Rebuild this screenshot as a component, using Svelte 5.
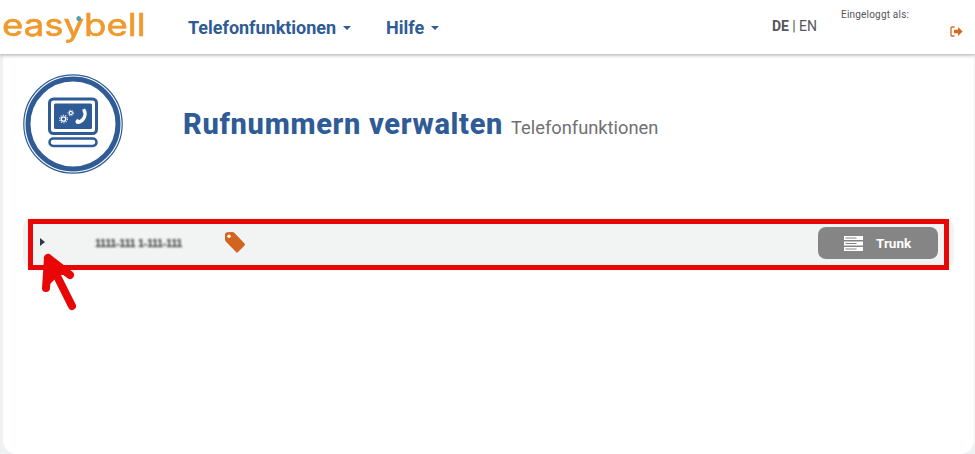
<script>
  const nav = ['Telefonfunktionen', 'Hilfe'];
</script>

<div class="page">
  <header class="topbar">
    <div class="logo-box">
      <div class="logo">eas<span class="y">y<i class="dot"></i></span>bell</div>
    </div>
    <nav class="nav">
      {#each nav as item}
        <span class="nav-item">{item}<i class="caret"></i></span>
      {/each}
    </nav>
    <div class="lang"><b>DE</b> | EN</div>
    <div class="user">
      <div class="user-label">Eingeloggt als:</div>
      <svg class="logout" width="13" height="11" viewBox="0 0 13 11">
        <path d="M4.5 1H2Q1 1 1 2V9Q1 10 2 10H4.5" fill="none" stroke="#d2691e" stroke-width="1.3"/>
        <path d="M4 3.7H8V1L12.6 5.5L8 10V7.3H4Z" fill="#d2691e"/>
      </svg>
    </div>
  </header>

  <main class="card">
    <section class="title-row">
      <svg class="badge" width="100" height="100" viewBox="0 0 100 100">
        <circle cx="50" cy="50" r="49.2" fill="none" stroke="#2f5b96" stroke-width="1.2"/>
        <circle cx="50" cy="50" r="45" fill="none" stroke="#2f5b96" stroke-width="5"/>
        <rect x="26.5" y="25" width="47" height="34.500" rx="4" fill="none" stroke="#2f5b96" stroke-width="3"/>
        <rect x="31" y="29.500" width="38" height="25.500" rx="1.5" fill="#2f5b96"/>
        <rect x="26.5" y="64.500" width="47" height="7.500" rx="3.7" fill="none" stroke="#2f5b96" stroke-width="2.5"/>
        <circle cx="40.500" cy="45" r="2.200" fill="none" stroke="#fff" stroke-width="1.300"/>
        <circle cx="40.500" cy="45" r="3.800" fill="none" stroke="#fff" stroke-width="1.100" stroke-dasharray="1.200 1.190"/>
        <circle cx="47.800" cy="39" r="1.600" fill="none" stroke="#fff" stroke-width="1.100"/>
        <circle cx="47.800" cy="39" r="2.800" fill="none" stroke="#fff" stroke-width="0.900" stroke-dasharray="0.900 0.860"/>
        <path d="M62 34.500L59.200 35.800L60.500 40Q60.200 43.500 56.500 46L54 45L52.200 47.500Q53 50.500 55.500 50Q60.500 49 63 43.500Q64.800 38.500 62 34.500Z" fill="#fff"/>
      </svg>
      <h1>Rufnummern verwalten <small>Telefonfunktionen</small></h1>
    </section>

    <section class="row">
      <i class="tri"></i>
      <span class="number">1111-111 1-111-111</span>
      <svg class="tag" width="24" height="23" viewBox="0 0 24 23">
        <path d="M2 3.500Q2 1.500 4 1.200L9.500 1Q10.500 1 11.500 2L21.500 12.500Q22.500 13.500 21.500 14.500L15 21Q14 22 13 21L2.800 10.500Q2 9.500 2 8.500Z" fill="#d2641e"/>
        <circle cx="6" cy="5.200" r="1.700" fill="#fff"/>
      </svg>
      <button class="trunk">
        <svg width="19" height="15" viewBox="0 0 19 15">
          <g fill="#fff">
            <rect y="0" width="19" height="4"/><rect y="5.500" width="19" height="4"/><rect y="11" width="19" height="4"/>
          </g>
          <g fill="#858585">
            <rect x="1.500" y="1.500" width="11" height="1"/><rect x="1.500" y="7" width="11" height="1"/><rect x="1.500" y="12.500" width="11" height="1"/>
          </g>
        </svg>
        <span>Trunk</span>
      </button>
      <div class="highlight"></div>
    </section>

    <svg class="arrow" width="42" height="64" viewBox="0 0 42 64">
      <path d="M8 7L6 37L19 24L30 24Z" fill="#e90606"/>
      <path d="M8 7L6 37M8 7L30 24M8 7L32 55" fill="none" stroke="#e90606" stroke-width="8" stroke-linecap="round" stroke-linejoin="round"/>
    </svg>
  </main>
</div>

<style>
  :global(body) {
    margin: 0;
    background: #eef2f3;
    font-family: "Open Sans", "Liberation Sans", sans-serif;
  }
  .page {
    height: 454px;
    overflow: hidden;
    position: relative;
  }
  .topbar {
    height: 54px;
    background: #fff;
    box-shadow: 0 1px 4px rgba(0, 0, 0, 0.35);
    display: flex;
    align-items: center;
    position: relative;
    z-index: 1;
  }
  .logo-box {
    width: 188px;
    flex: none;
    padding-left: 2px;
    box-sizing: border-box;
  }
  .logo {
    font-family: Inter, sans-serif;
    font-size: 31px;
    font-weight: 400;
    color: #f0992c;
    line-height: 54px;
    margin-top: -5px;
    -webkit-text-stroke: 0.6px #f0992c;
    transform: scaleX(1.18);
    transform-origin: left center;
    white-space: nowrap;
  }
  .y {
    position: relative;
  }
  .dot {
    position: absolute;
    left: 11px;
    top: 10px;
    width: 4px;
    height: 5px;
    border-radius: 50%;
    background: #4aa3ad;
  }
  .nav {
    display: flex;
    gap: 35px;
    flex: 1;
  }
  .nav-item {
    font-family: Roboto, sans-serif;
    font-size: 18px;
    font-weight: 700;
    color: #2f5b96;
    display: flex;
    align-items: center;
    letter-spacing: -0.02px;
  }
  .caret {
    margin-left: 7px;
    margin-top: 2px;
    border-left: 4px solid transparent;
    border-right: 4px solid transparent;
    border-top: 4px solid #2f5b96;
  }
  .lang {
    font-family: Roboto, sans-serif;
    width: 69px;
    flex: none;
    font-size: 14px;
    letter-spacing: -0.05px;
    color: #55565a;
    margin-top: -3px;
  }
  .user {
    width: 134px;
    height: 54px;
    flex: none;
    position: relative;
  }
  .user-label {
    font-family: Roboto, sans-serif;
    font-size: 10px;
    letter-spacing: 0.2px;
    color: #55565a;
    padding-top: 9px;
  }
  .logout {
    position: absolute;
    left: 109px;
    top: 26px;
  }
  .card {
    position: relative;
    margin: 0 1px 0 3px;
    height: 400px;
    background: #fff;
    border-radius: 0 0 14px 14px;
    padding: 0 20px;
    box-sizing: border-box;
  }
  .title-row {
    display: flex;
    align-items: center;
    height: 164px;
  }
  .badge {
    flex: none;
    margin-top: -24px;
    margin-right: 60px;
  }
  h1 {
    margin: -24px 0 0;
    font-family: Roboto, sans-serif;
    font-size: 29px;
    font-weight: 800;
    letter-spacing: 0.7px;
    color: #2f5b96;
    white-space: nowrap;
  }
  small {
    font-size: 18.300px;
    font-weight: 400;
    letter-spacing: 0;
    color: #6f7074;
  }
  .row {
    position: relative;
    height: 51px;
    background: #f2f4f4;
    border-radius: 10px;
    display: flex;
    align-items: center;
    padding-left: 17px;
    padding-right: 16px;
  }
  .tri {
    flex: none;
    border-top: 4px solid transparent;
    border-bottom: 4px solid transparent;
    border-left: 5px solid #2b3a4a;
    margin-top: -3px;
  }
  .number {
    width: 128px;
    flex: none;
    margin-left: 50px;
    font-family: "Liberation Sans", sans-serif;
    font-size: 11px;
    font-weight: 700;
    letter-spacing: -0.4px;
    white-space: nowrap;
    color: #333;
    filter: blur(1.300px);
    margin-top: -2px;
  }
  .tag {
    flex: none;
    margin-top: -2px;
  }
  .trunk {
    margin-left: auto;
    width: 120px;
    height: 32px;
    border: 0;
    border-radius: 8px;
    background: #858585;
    display: flex;
    align-items: center;
    padding: 0 0 0 26px;
    gap: 13px;
    color: #fff;
    font-family: Roboto, sans-serif;
    font-weight: 700;
    font-size: 13.500px;
    margin-top: -1px;
  }
  .highlight {
    position: absolute;
    left: 5px;
    right: 5px;
    top: 1px;
    bottom: -1px;
    border: 5px solid #e90606;
  }
  .arrow {
    position: absolute;
    left: 37px;
    top: 197px;
  }
</style>
